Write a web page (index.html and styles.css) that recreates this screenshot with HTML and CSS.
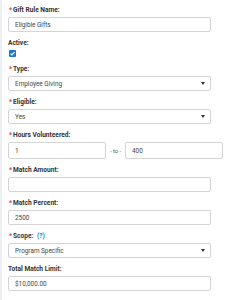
FILE: index.html
```html
<!DOCTYPE html>
<html lang="en">

<head>
    <meta charset="UTF-8">
    <meta name="viewport" content="width=device-width, initial-scale=1.0">
    <title>Gift Rule</title>
    <link rel="stylesheet" href="styles.css">
</head>

<body>
    <div class="page">
        <form class="rule-form">

            <div class="field">
                <label class="field-label"><span class="req">*</span>Gift Rule Name:</label>
                <input class="text-input" type="text" value="Eligible Gifts">
            </div>

            <div class="field field-check">
                <label class="field-label">Active:</label>
                <span class="check-box">
                    <svg viewBox="0 0 8 8" width="7" height="7">
                        <path d="M1.8 4.1 L3.3 5.6 L6.3 2.5" fill="none" stroke="#fff" stroke-width="1.2" />
                    </svg>
                </span>
            </div>

            <div class="field">
                <label class="field-label"><span class="req">*</span>Type:</label>
                <div class="select-wrap">
                    <select class="select-input">
                        <option>Employee Giving</option>
                    </select>
                </div>
            </div>

            <div class="field">
                <label class="field-label"><span class="req">*</span>Eligible:</label>
                <div class="select-wrap">
                    <select class="select-input">
                        <option>Yes</option>
                    </select>
                </div>
            </div>

            <div class="field">
                <label class="field-label"><span class="req">*</span>Hours Volunteered:</label>
                <div class="range-row">
                    <input class="text-input range-input" type="text" value="1">
                    <span class="range-sep">- to -</span>
                    <input class="text-input range-input" type="text" value="400">
                </div>
            </div>

            <div class="field">
                <label class="field-label"><span class="req">*</span>Match Amount:</label>
                <input class="text-input" type="text" value="">
            </div>

            <div class="field">
                <label class="field-label"><span class="req">*</span>Match Percent:</label>
                <input class="text-input" type="text" value="2500">
            </div>

            <div class="field">
                <label class="field-label"><span class="req">*</span>Scope: <a class="help" href="#">(?)</a></label>
                <div class="select-wrap">
                    <select class="select-input">
                        <option>Program Specific</option>
                    </select>
                </div>
            </div>

            <div class="field">
                <label class="field-label">Total Match Limit:</label>
                <input class="text-input" type="text" value="$10,000.00">
            </div>

        </form>
    </div>
</body>

</html>
```

FILE: styles.css
```css
* {
    box-sizing: border-box;
}

html,
body {
    margin: 0;
    padding: 0;
}

body {
    background: #fff;
    font-family: Roboto, "Liberation Sans", sans-serif;
    color: #333;
}

.page {
    min-height: 100vh;
    border-left: 2px solid #eceff3;
    padding: 6px 0 0 6px;
}

.field {
    margin-bottom: 7px;
}

.field-label {
    display: block;
    height: 8px;
    line-height: 8px;
    margin-bottom: 3px;
    font-size: 6.6px;
    font-weight: bold;
    color: #333;
}

.req {
    color: #e0403a;
    margin-right: 1px;
    padding-left: 1px;
}

.help {
    color: #2a74c9;
    text-decoration: none;
    margin-left: 2px;
}

.text-input,
.select-input {
    display: block;
    width: 203px;
    height: 15px;
    margin: 0;
    padding: 0 0 0 6px;
    border: 1px solid #d4d4d4;
    border-radius: 2px;
    background: #fff;
    font-family: Roboto, "Liberation Sans", sans-serif;
    font-size: 6.4px;
    color: #444;
    outline: none;
}

.select-input {
    appearance: none;
    -webkit-appearance: none;
    padding-left: 6px;
}

.select-wrap {
    position: relative;
    width: 203px;
}

.select-wrap::after {
    content: "";
    position: absolute;
    right: 6px;
    top: 6px;
    border-left: 2.5px solid transparent;
    border-right: 2.5px solid transparent;
    border-top: 3px solid #333;
}

.field-check {
    margin-bottom: 8px;
}

.check-box {
    display: flex;
    align-items: center;
    justify-content: center;
    width: 7px;
    height: 7px;
    margin-left: 1px;
    border-radius: 1px;
    background: #2379c9;
}

.check-box svg {
    display: block;
}

.range-row {
    display: flex;
    align-items: center;
}

.range-input {
    width: 98px;
    height: 17px;
}

.range-sep {
    width: 19px;
    text-align: center;
    font-size: 5.8px;
    color: #555;
}
```
